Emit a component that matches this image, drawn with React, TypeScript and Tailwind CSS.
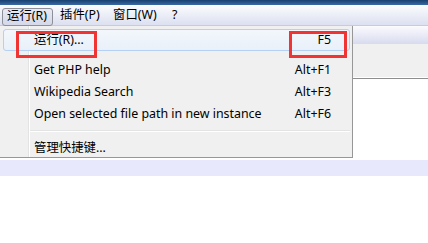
import React from "react";

const font = {
  fontFamily: '"Segoe UI", "Noto Sans", "Noto Sans CJK SC", sans-serif',
};

function Item({ label, keys }: { label: string; keys?: string }) {
  return (
    <div className="h-[22px] flex items-center pl-[34px] pr-[21px] justify-between">
      <span>{label}</span>
      {keys && <span className="text-right">{keys}</span>}
    </div>
  );
}

export default function App() {
  return (
    <div
      className="relative w-[428px] h-[243px] overflow-hidden bg-white text-[12.4px] text-black"
      style={font}
    >
      <div className="h-[5px] bg-gradient-to-b from-[#17406f] to-[#3b6aa3]" />
      <div className="h-[21px] bg-gradient-to-b from-[#fbfcfe] to-[#dce0f0] flex items-center border-b border-[#c8cbe0]">
        <div className="ml-[2px] w-[51px] h-[18px] mt-[3px] pl-[4px] flex items-center rounded-[3px] border border-[#8d8f99] bg-gradient-to-b from-[#e8eaf3] to-[#d4d8e8]">
          运行(R)
        </div>
        <div className="ml-[7px] w-[53px]">插件(P)</div>
        <div className="w-[59px]">窗口(W)</div>
        <div>?</div>
      </div>
      <div className="h-[18px] bg-gradient-to-b from-[#fbfbfe] to-[#d8dbee]" />
      <div className="h-[34px] bg-[#f0f0f0] border-b border-white" />
      <div className="h-[1px] bg-[#8f8f8f]" />
      <div className="h-[81px] bg-white" />
      <div className="h-[16px] bg-[#e8e8fc]" />

      <div className="absolute left-0 top-[26px] w-[353px] h-[132px] bg-[#f0f0f0] border-r border-b border-[#979797] pt-[3px]">
        <div className="absolute left-[28px] top-0 bottom-0 w-[2px] border-l border-[#e2e3e3] bg-white" />
        <div className="relative">
          <div className="absolute left-[3px] right-[2px] top-0 h-[22px] rounded-[3px] border border-[#b4d0f2] bg-gradient-to-b from-[#f3f7fc] to-[#e9f0f9]" />
          <div className="relative">
            <Item label="运行(R)..." keys="F5" />
          </div>
          <div className="h-[8px]" />
          <Item label="Get PHP help" keys="Alt+F1" />
          <Item label="Wikipedia Search" keys="Alt+F3" />
          <Item label="Open selected file path in new instance" keys="Alt+F6" />
          <div className="ml-[30px] mr-[2px] my-[5px] h-[2px] border-t border-[#e2e3e3] bg-white" />
          <Item label="管理快捷键..." />
        </div>
      </div>

      <div className="absolute left-[16px] top-[31px] w-[81px] h-[27px] border-[3px] border-[#f03434]" />
      <div className="absolute left-[289px] top-[31px] w-[58px] h-[27px] border-[3px] border-[#f03434]" />
    </div>
  );
}
